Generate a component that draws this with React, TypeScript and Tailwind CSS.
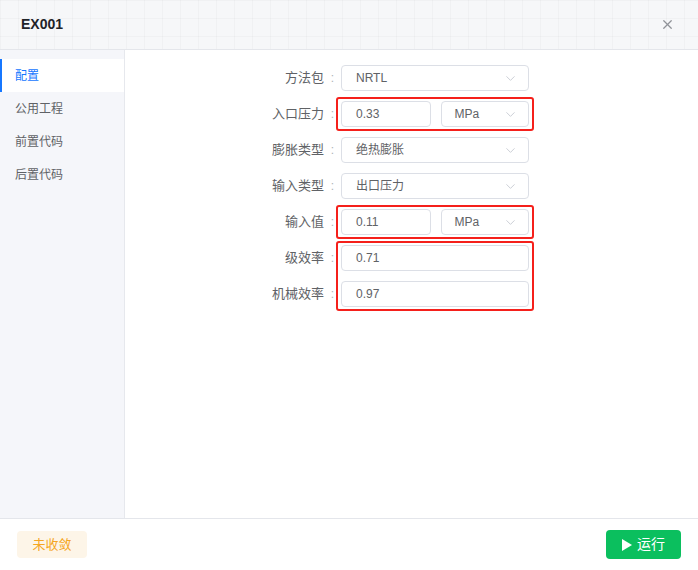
import { ChevronDown, X } from "lucide-react";

type Field = {
    label: string;
    value: string;
    unit?: string;
    select?: boolean;
};

type Group = {
    marked: boolean;
    rows: Field[];
};

const groups: Group[] = [
    { marked: false, rows: [{ label: "方法包", value: "NRTL", select: true }] },
    { marked: true, rows: [{ label: "入口压力", value: "0.33", unit: "MPa" }] },
    { marked: false, rows: [{ label: "膨胀类型", value: "绝热膨胀", select: true }] },
    { marked: false, rows: [{ label: "输入类型", value: "出口压力", select: true }] },
    { marked: true, rows: [{ label: "输入值", value: "0.11", unit: "MPa" }] },
    {
        marked: true,
        rows: [
            { label: "级效率", value: "0.71" },
            { label: "机械效率", value: "0.97" },
        ],
    },
];

const menu = ["配置", "公用工程", "前置代码", "后置代码"];

const Box = ({ text, select, className }: { text: string; select?: boolean; className?: string }) => {
    return (
        <div
            className={`h-[26px] flex items-center justify-between border border-[#dcdfe6] rounded-[4px] bg-white pl-[14px] pr-[10px] text-[12px] text-[#606266] ${className ?? ""}`}
        >
            <span>{text}</span>
            {select && <ChevronDown className="size-[15px] text-[#c0c4cc]" strokeWidth={1.3} />}
        </div>
    );
};

const Control = ({ field }: { field: Field }) => {
    if (field.unit) {
        return (
            <div className="h-9 flex items-center gap-[10px]">
                <Box text={field.value} className="flex-1" />
                <Box text={field.unit} select className="flex-1 !pl-[13px]" />
            </div>
        );
    }
    return (
        <div className="h-9 flex items-center">
            <Box text={field.value} select={field.select} className="flex-1" />
        </div>
    );
};

export default function App() {
    return (
        <div
            className="w-[698px] h-screen flex flex-col bg-white overflow-hidden"
            style={{ fontFamily: '"Liberation Sans", "Noto Sans CJK SC", sans-serif' }}
        >
            <div className="h-[50px] shrink-0 flex items-center justify-between pl-[21px] pr-[23px] border-b border-[#e4e6eb] bg-[#f6f7f9] bg-[linear-gradient(to_right,rgba(0,0,0,0.022)_1px,transparent_1px),linear-gradient(to_bottom,rgba(0,0,0,0.022)_1px,transparent_1px)] bg-[size:18px_18px]">
                <h2 className="text-[14px] font-bold text-[#1f2329]">EX001</h2>
                <X className="size-[15px] text-[#909399]" strokeWidth={2} />
            </div>

            <div className="flex-1 flex min-h-0">
                <div className="w-[125px] shrink-0 bg-[#f5f6fa] border-r border-[#e6e8ed] pt-[9px] flex flex-col">
                    {menu.map((item, i) => (
                        <div
                            key={item}
                            className={`h-[33px] flex items-center pl-[15px] text-[12px] ${
                                i === 0
                                    ? "bg-white text-[#1677ff] border-l-2 border-[#1677ff] !pl-[13px]"
                                    : "text-[#606266]"
                            }`}
                        >
                            {item}
                        </div>
                    ))}
                </div>

                <div className="flex-1 pt-[10px] pl-[109px]">
                    <div className="w-[295px] flex flex-col">
                        {groups.map((group, gi) => (
                            <div key={gi} className="flex">
                                <div className="w-[90px] flex flex-col">
                                    {group.rows.map((row) => (
                                        <div
                                            key={row.label}
                                            className="h-9 flex items-center justify-end text-[13px] text-[#606266]"
                                        >
                                            {row.label}
                                        </div>
                                    ))}
                                </div>
                                <div className="w-[17px] flex flex-col">
                                    {group.rows.map((row) => (
                                        <div
                                            key={row.label}
                                            className="h-9 flex items-center justify-center text-[12px] text-[#b0b3b8]"
                                        >
                                            :
                                        </div>
                                    ))}
                                </div>
                                <div className="w-[188px] flex flex-col relative">
                                    {group.rows.map((row) => (
                                        <Control key={row.label} field={row} />
                                    ))}
                                    {group.marked && (
                                        <div className="absolute left-[-5px] right-[-5px] top-[1px] bottom-[1px] border-2 border-[#f5201b] rounded-[3px] pointer-events-none" />
                                    )}
                                </div>
                            </div>
                        ))}
                    </div>
                </div>
            </div>

            <div className="h-[52px] shrink-0 border-t border-[#e4e6eb] flex items-center justify-between px-[17px]">
                <button className="w-[70px] h-[27px] rounded-[4px] bg-[#fdf5e8] text-[13px] text-[#f5a623]">
                    未收敛
                </button>
                <button className="w-[75px] h-[29px] rounded-[4px] bg-[#0bbf5e] text-white text-[14px] flex items-center justify-center gap-[5px]">
                    <svg viewBox="0 0 10 12" className="w-[10px] h-[12px]" fill="currentColor">
                        <path d="M0 0 L10 6 L0 12 Z" />
                    </svg>
                    运行
                </button>
            </div>
        </div>
    );
}
